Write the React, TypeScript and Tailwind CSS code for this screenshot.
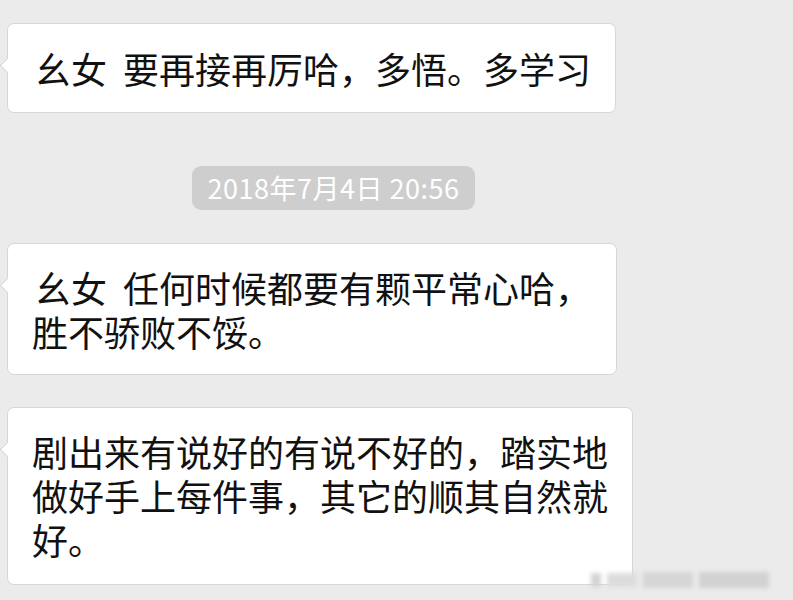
import type { ReactNode } from 'react';

const cjk = { fontFamily: '"Noto Sans CJK SC", "Noto Sans", sans-serif' };

function Bubble({ width, pad, children }: { width: string; pad: string; children: ReactNode }) {
  return (
    <div className={`relative ${width} ${pad} rounded-[7px] border border-[#d6d6d6] bg-white pl-[24px] pr-[20px]`}>
      {/* tail */}
      <div className="absolute left-[-6px] top-[36px] h-[11px] w-[11px] rotate-45 border-b border-l border-[#d6d6d6] bg-white" />
      <p className="relative text-[36px] leading-[44px] text-[#111]">{children}</p>
    </div>
  );
}

export default function App() {
  return (
    <div className="relative h-[600px] w-[793px] overflow-hidden bg-[#ebebeb]" style={cjk}>
      <div className="flex flex-col pl-[7px] pt-[23px]">
        <Bubble width="w-[609px]" pad="py-[22px]">
          <span className="ml-[3px]">幺女</span>
          <span className="inline-block w-[16px]" />要再接再厉哈，多悟。多学习
        </Bubble>

        {/* time divider */}
        <div className="mt-[53px] flex pl-[185px]">
          <div className="flex h-[44px] w-[283px] items-center justify-center rounded-[9px] bg-[#cecece] text-[27px] tracking-[0.5px] text-white">
            2018年7月4日 20:56
          </div>
        </div>

        <div className="mt-[33px]">
          <Bubble width="w-[610px]" pad="py-[21px]">
            <span className="ml-[3px]">幺女</span>
            <span className="inline-block w-[16px]" />任何时候都要有颗平常心哈，
            <br />
            胜不骄败不馁。
          </Bubble>
        </div>

        <div className="mt-[32px]">
          <Bubble width="w-[626px]" pad="pt-[21px] pb-[23px]">
            剧出来有说好的有说不好的，踏实地
            <br />
            做好手上每件事，其它的顺其自然就
            <br />
            好。
          </Bubble>
        </div>
      </div>

      {/* blurred watermark */}
      <div className="absolute bottom-[6px] right-[10px] flex h-[28px] w-[200px] items-center gap-[6px] pl-[8px] blur-[2px]">
        <div className="h-[14px] w-[10px] bg-[#d4d4d4]" />
        <div className="h-[14px] w-[30px] bg-[#dcdcdc]" />
        <div className="h-[16px] w-[50px] bg-[#d6d6d6]" />
        <div className="h-[16px] w-[70px] bg-[#d2d2d2]" />
      </div>
    </div>
  );
}
